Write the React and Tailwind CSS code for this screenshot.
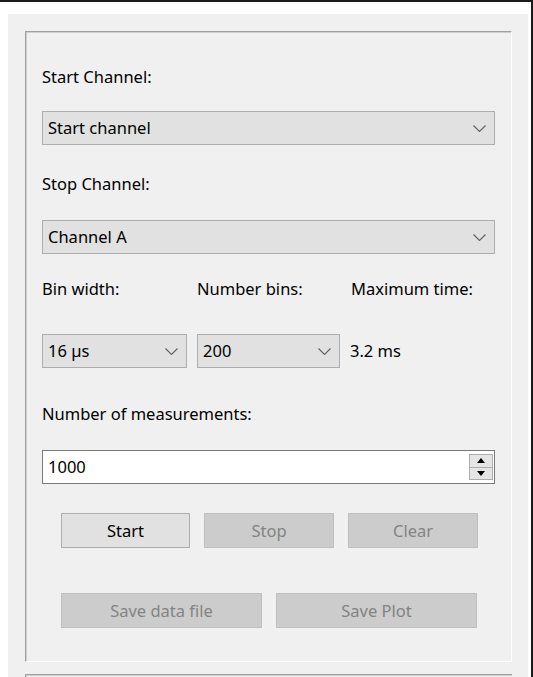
import { useState } from "react";

const font = { fontFamily: '"Noto Sans", "Open Sans", Arial, sans-serif' };

function Chevron() {
  return (
    <svg width="13" height="7" viewBox="0 0 13 7" className="shrink-0">
      <path d="M0.5 0.5 L6.5 6.5 L12.5 0.5" fill="none" stroke="#606060" strokeWidth="1.1" />
    </svg>
  );
}

function Combo({ value, className = "" }) {
  return (
    <div
      className={`h-[34px] flex items-center justify-between pl-[5px] pr-[8px] bg-[#e1e1e1] border border-[#adadad] text-black ${className}`}
    >
      <span>{value}</span>
      <Chevron />
    </div>
  );
}

function Button({ label, disabled, className = "" }) {
  return (
    <div
      className={`h-[35px] flex items-center justify-center border ${
        disabled
          ? "bg-[#cccccc] border-[#bfbfbf] text-[#838383]"
          : "bg-[#e1e1e1] border-[#adadad] text-black"
      } ${className}`}
    >
      {label}
    </div>
  );
}

function SpinBox({ value }) {
  const [v] = useState(value);
  return (
    <div className="h-[34px] w-[453px] flex items-center justify-between bg-white border border-[#7a7a7a] pl-[5px] pr-[1px]">
      <span>{v}</span>
      <div className="flex flex-col w-[24px] h-[26px] border border-[#adadad] bg-[#e5e5e5]">
        <div className="flex-1 flex items-center justify-center border-b border-[#adadad]">
          <svg width="8" height="5" viewBox="0 0 8 5">
            <path d="M0 5 L4 0 L8 5 Z" fill="#000" />
          </svg>
        </div>
        <div className="flex-1 flex items-center justify-center">
          <svg width="8" height="5" viewBox="0 0 8 5">
            <path d="M0 0 L4 5 L8 0 Z" fill="#000" />
          </svg>
        </div>
      </div>
    </div>
  );
}

export default function App() {
  return (
    <div
      className="w-[533px] h-[677px] bg-white border-t-2 border-r-2 border-[#1b1b1b] overflow-hidden text-[16.5px] leading-[20px]"
      style={font}
    >
      <div className="ml-[8px] mt-[12px] w-[520px] h-[700px] bg-[#f0f0f0] pl-[17px] pt-[17px]">
        {/* Group box */}
        <div className="w-[487px] h-[631px] border-t border-l border-[#a0a0a0] border-b border-r border-b-white border-r-white shadow-[inset_1px_1px_0_#cfcfcf] pl-[16px] pt-[35px]">
          <p>Start Channel:</p>
          <Combo value="Start channel" className="w-[453px] mt-[24px]" />

          <p className="mt-[29px]">Stop Channel:</p>
          <Combo value="Channel A" className="w-[453px] mt-[26px]" />

          <div className="flex mt-[25px]">
            <p className="w-[155px]">Bin width:</p>
            <p className="w-[154px]">Number bins:</p>
            <p>Maximum time:</p>
          </div>
          <div className="flex items-center mt-[35px]">
            <Combo value="16 µs" className="w-[145px]" />
            <Combo value="200" className="w-[143px] ml-[10px]" />
            <span className="ml-[10px]">3.2 ms</span>
          </div>

          <p className="mt-[36px]">Number of measurements:</p>
          <div className="mt-[26px]">
            <SpinBox value="1000" />
          </div>

          <div className="flex gap-[14px] ml-[19px] mt-[29px]">
            <Button label="Start" className="w-[129px]" />
            <Button label="Stop" disabled className="w-[130px]" />
            <Button label="Clear" disabled className="w-[130px]" />
          </div>

          <div className="flex gap-[14px] ml-[19px] mt-[45px]">
            <Button label="Save data file" disabled className="w-[201px]" />
            <Button label="Save Plot" disabled className="w-[201px]" />
          </div>
        </div>

        {/* Next group box (cut off) */}
        <div className="w-[487px] h-[40px] mt-[12px] border-t border-l border-[#a0a0a0] shadow-[inset_1px_1px_0_#cfcfcf]" />
      </div>
    </div>
  );
}
